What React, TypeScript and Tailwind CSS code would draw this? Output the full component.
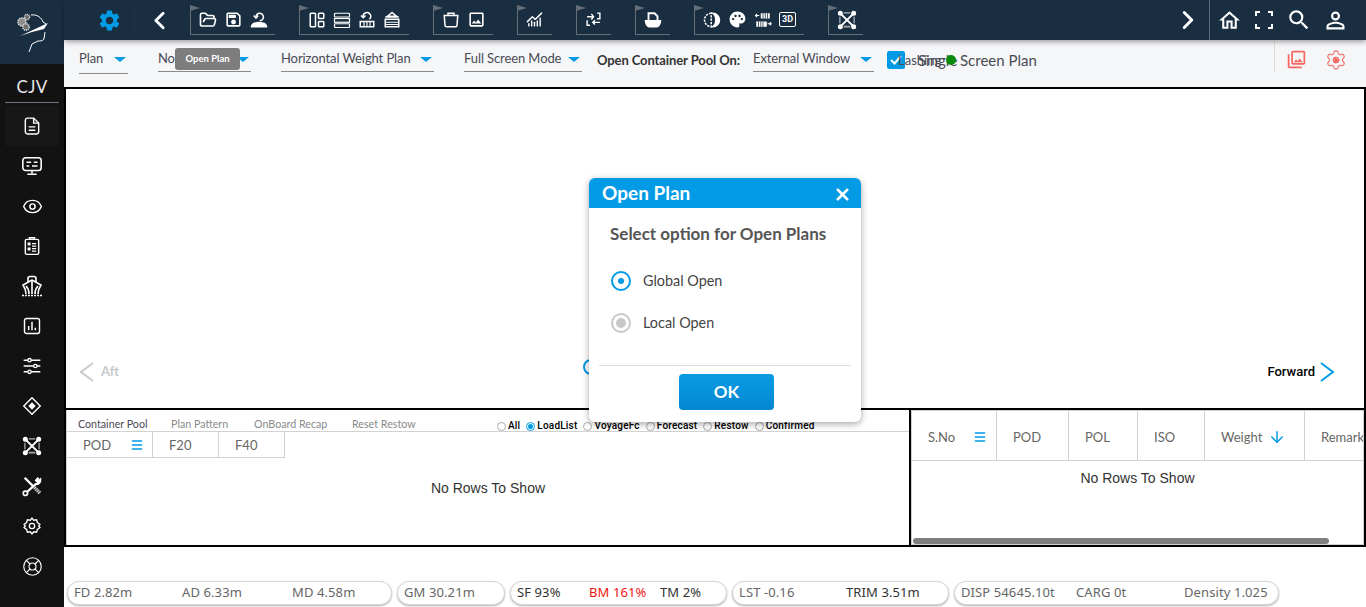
import { ChartNoAxesCombined, ChevronLeft, ChevronRight, Eye, FolderOpen, LifeBuoy, Menu, Play, Settings, ArrowDown, X } from "lucide-react";
import { MdOutlineHome, MdOutlineImage, MdOutlinePersonOutline, MdOutlinePhotoLibrary, MdOutlineSave, MdPalette, MdSearch, MdSettings } from "react-icons/md";
import type { ReactNode } from "react";

const muli = "font-['Lato','Noto_Sans',sans-serif]";

// small hand drawn icons for the ones the packages lack
const Svg = ({ size = 18, children }: { size?: number; children: ReactNode }) => (
    <svg width={size} height={size} viewBox="0 0 24 24" fill="none" stroke="currentColor" strokeWidth={2} className="shrink-0">
        {children}
    </svg>
);

const CloudUndo = () => (
    <Svg>
        <path d="M8 9a5 5 0 1 1 5 4" />
        <path d="M5 6l3 3.5L11 6" />
        <path d="M2 21c0-3 3-5 6-5 1-1 6-1 8 0 3 0 6 2 6 5H2z" fill="currentColor" />
    </Svg>
);

const LayoutIcon = () => (
    <Svg>
        <rect x="3" y="3" width="7" height="18" rx="1" />
        <rect x="14" y="3" width="7" height="7" rx="1" />
        <rect x="14" y="14" width="7" height="7" rx="1" />
    </Svg>
);

const RowsIcon = () => (
    <Svg>
        <rect x="2" y="3" width="20" height="5" rx="1" strokeWidth={1.6} />
        <rect x="2" y="10" width="20" height="5" strokeWidth={1.6} />
        <rect x="2" y="17" width="20" height="5" rx="1" strokeWidth={1.6} />
    </Svg>
);

const UndoBox = () => (
    <Svg>
        <path d="M7 8a5 5 0 1 1 8 3" />
        <path d="M4 6l3 3 3-3" />
        <rect x="3" y="14" width="18" height="7" />
        <path d="M8 14v7M12 14v7M16 14v7" strokeWidth={1.5} />
    </Svg>
);

const CraneBox = () => (
    <Svg>
        <path d="M12 2 6 7h12z" />
        <path d="M3 8h18" />
        <rect x="3" y="11" width="18" height="10" />
        <path d="M3 15h18M3 18h18" strokeWidth={1.5} />
    </Svg>
);

const CupIcon = () => (
    <Svg>
        <path d="M3 6h18l-1 13a2 2 0 0 1-2 2H6a2 2 0 0 1-2-2z" />
        <path d="M8 6V3h8v3" />
    </Svg>
);

const SwapIcon = () => (
    <Svg size={17}>
        <path d="M3 8h9M9 4l3 4-3 4" />
        <path d="M17 3h4v8h-4" />
        <path d="M21 16H11M14 13l-3 3 3 3" />
        <path d="M3 13v7h4" />
    </Svg>
);

const BowlDoc = () => (
    <Svg>
        <path d="M6 13V3h8l4 4v6" strokeWidth={2.5} />
        <path d="M2 13h20c0 5-3 8-6 8H8c-3 0-6-3-6-8z" fill="currentColor" />
    </Svg>
);

const HalfCircle = () => (
    <Svg>
        <path d="M11 3a9 9 0 0 0 0 18z" strokeDasharray="3 1.5" />
        <path d="M13 3a9 9 0 0 1 0 18c3-2 4-5 4-9s-1-7-4-9z" fill="currentColor" />
    </Svg>
);

const BoxArrows = () => (
    <Svg>
        <path d="M9 3h12v7H9zM3 14h14v7H3z" fill="currentColor" stroke="none" />
        <path d="M12 3v7M15 3v7M18 3v7M6 14v7M9 14v7M12 14v7" stroke="#1a2e42" strokeWidth={1} />
        <path d="M7 6H2M4 4 2 6l2 2M18 17h5M21 15l2 2-2 2" strokeWidth={1.5} />
    </Svg>
);

const CrossBox = () => (
    <Svg size={20}>
        <path d="M4 4l16 16M20 4 4 20" strokeWidth={2.4} />
        <path d="M8 3.5h8" strokeWidth={1} />
        <path d="M8 20h8" strokeWidth={2.5} stroke="#9a9a9a" />
        <path d="M3.5 8v8M20.5 8v8" strokeWidth={1} />
        <circle cx="4" cy="4" r="2" fill="currentColor" />
        <circle cx="20" cy="4" r="2" fill="currentColor" />
        <circle cx="4" cy="20" r="2" fill="currentColor" />
        <circle cx="20" cy="20" r="2" fill="currentColor" />
    </Svg>
);

const ThreeD = () => (
    <div className="w-[17px] h-[15px] border border-white rounded-[2px] flex items-center justify-center font-['Roboto',sans-serif] text-[9px] font-bold leading-none text-white shrink-0">
        3D
    </div>
);

const DocIcon = () => (
    <Svg size={20}>
        <path d="M6 2.5h8l6 6V19a2.5 2.5 0 0 1-2.5 2.5h-11A2.5 2.5 0 0 1 4 19V5a2.5 2.5 0 0 1 2-2.5z" strokeWidth={1.7} />
        <path d="M14 2.5V8.5h6" strokeWidth={1.7} />
        <path d="M8 13h8M8 17h8" strokeWidth={1.7} />
    </Svg>
);

const MonitorIcon = () => (
    <Svg size={22}>
        <rect x="2" y="3" width="20" height="14" rx="3" strokeWidth={1.7} />
        <path d="M6 8h5M14 8h4M6 12h3M12 12h6" strokeWidth={1.6} />
        <path d="M12 17v3M7 21h10" strokeWidth={1.7} />
    </Svg>
);

const ClipboardIcon = () => (
    <Svg size={20}>
        <rect x="4" y="4" width="16" height="18" rx="1.5" strokeWidth={1.7} />
        <path d="M9 4V2h6v2" strokeWidth={1.7} />
        <path d="M7 8h3v3H7zM7 14h3v3H7z" fill="currentColor" strokeWidth={0.5} />
        <path d="M12 9h5M12 12h5M12 15h5M12 18h5" strokeWidth={1.5} />
    </Svg>
);

const ShipIcon = () => (
    <Svg size={24}>
        <path d="M8 8V4.5a2 2 0 0 1 2-2h4a2 2 0 0 1 2 2V8" strokeWidth={1.6} />
        <path d="M12 6 3 11c2 3 3 6 3 9M12 6l9 5c-2 3-3 6-3 9" strokeWidth={1.6} />
        <path d="M12 6v14M9 20c0-3-1-6-3-8M15 20c0-3 1-6 3-8" strokeWidth={1.6} />
        <path d="M2 21.5h20" strokeWidth={1.4} strokeDasharray="2 1" />
    </Svg>
);

const ChartBox = () => (
    <Svg size={20}>
        <rect x="3" y="3" width="18" height="18" rx="2.5" strokeWidth={1.7} />
        <path d="M8 17v-5M12 17V7M16 17v-3" strokeWidth={1.8} />
    </Svg>
);

const SlidersIcon = () => (
    <Svg size={20}>
        <path d="M2 5h5M11 5h11M2 12h12M18 12h4M2 19h5M11 19h11" strokeWidth={1.8} />
        <circle cx="9" cy="5" r="2" strokeWidth={1.6} />
        <circle cx="16" cy="12" r="2" strokeWidth={1.6} />
        <circle cx="9" cy="19" r="2" strokeWidth={1.6} />
    </Svg>
);

const DiamondIcon = () => (
    <Svg size={22}>
        <path d="M12 3l9 9-9 9-9-9z" strokeWidth={1.5} />
        <path d="M12 8l4 4-4 4-4-4z" fill="currentColor" stroke="none" />
    </Svg>
);

const ToolsIcon = () => (
    <Svg size={22}>
        <path d="M4 3l9 9" strokeWidth={2.6} />
        <path d="M13 12l8 8" strokeWidth={4} strokeDasharray="1.6 .7" stroke="#cfcfcf" />
        <path d="M19 3l-2.5 3 1.5 1.5 3-2.5a4.5 4.5 0 0 1-5 5L6.5 18.5" strokeWidth={2.4} />
        <circle cx="4.8" cy="20" r="2.4" strokeWidth={1.8} />
    </Svg>
);

const HexGear = () => (
    <Svg size={20}>
        <path d="M12 2.5l2 2.5 3.5-.5 1 3.5 3 2-1.5 2 1.5 2-3 2-1 3.5-3.5-.5-2 2.5-2-2.5-3.5.5-1-3.5-3-2 1.5-2-1.5-2 3-2 1-3.5 3.5.5z" strokeWidth={1.6} />
        <circle cx="12" cy="12" r="3.2" strokeWidth={1.6} />
    </Svg>
);

const Logo = () => (
    <svg width="40" height="40" viewBox="0 0 40 40" fill="none" className="text-white">
        <circle cx="10" cy="10" r="4" fill="#8d8d8d" stroke="#d9d9d9" strokeWidth="1.6" strokeDasharray="1.4 .8" />
        <circle cx="14" cy="15" r="3.2" fill="#6f6f6f" stroke="#d9d9d9" strokeWidth="1.5" strokeDasharray="1.2 .7" />
        <circle cx="15" cy="5" r="2.6" fill="#6f6f6f" stroke="#d9d9d9" strokeWidth="1.4" strokeDasharray="1 .7" />
        <path d="M19 3c6-1 11 3 12 7l3 2" stroke="currentColor" strokeWidth="1" />
        <path d="M8 24 36 11l-4 6-12 3-12 4z" fill="currentColor" />
        <path d="M33 20l-1 7c-1 2-4 2-6 2l-6 3-3 8" stroke="currentColor" strokeWidth="1" />
    </svg>
);

const topGroups: ReactNode[][] = [
    [<FolderOpen size={18} strokeWidth={2.2} />, <MdOutlineSave size={19} />, <CloudUndo />],
    [<LayoutIcon />, <RowsIcon />, <UndoBox />, <CraneBox />],
    [<CupIcon />, <MdOutlineImage size={19} />],
    [<ChartNoAxesCombined size={17} />],
    [<SwapIcon />],
    [<BowlDoc />],
    [<HalfCircle />, <MdPalette size={19} />, <BoxArrows />, <ThreeD />],
    [<CrossBox />],
];

const groupWidths = ["w-[85px]", "w-[110px]", "w-[60px]", "w-[35px]", "w-[35px]", "w-[35px]", "w-[110px]", "w-[35px]"];

const sideIcons: ReactNode[] = [
    <DocIcon />,
    <MonitorIcon />,
    <Eye size={21} strokeWidth={1.7} />,
    <ClipboardIcon />,
    <ShipIcon />,
    <ChartBox />,
    <SlidersIcon />,
    <DiamondIcon />,
    <CrossBox />,
    <ToolsIcon />,
    <HexGear />,
    <LifeBuoy size={21} strokeWidth={1.3} />,
];

const ToolGroup = ({ width, children }: { width: string; children: ReactNode }) => (
    <div className={`relative ${width} h-[30px] border-l border-b border-[#656d76] flex items-center pl-[8px] gap-[7px] text-white`}>
        <svg width="10" height="6" viewBox="0 0 10 6" className="absolute -left-px top-0">
            <path d="M0 0l10 3-10 3z" fill="#656d76" />
        </svg>
        {children}
    </div>
);

const Dropdown = ({ label, width, className = "" }: { label: string; width: string; className?: string }) => (
    <div className={`${width} ${className} border-b border-[#8a8a8a] flex justify-between items-start shrink-0`}>
        <span className="text-[13px] leading-[20px] tracking-[-0.1px] text-[#4a4a55] whitespace-nowrap">{label}</span>
        <span className="mt-[9px] mr-[2px] border-x-[6px] border-x-transparent border-t-[5px] border-t-[#039be5]" />
    </div>
);

const Radio = ({ label, checked }: { label: string; checked?: boolean }) => (
    <div className="flex items-center gap-[2px] shrink-0">
        <span className={`w-[9px] h-[9px] rounded-full border flex items-center justify-center ${checked ? "border-[#039be5]" : "border-[#aaa]"}`}>
            {checked && <span className="w-[5px] h-[5px] rounded-full bg-[#039be5]" />}
        </span>
        <span className="text-[10px] font-medium tracking-[0.2px] text-black">{label}</span>
    </div>
);

const Stat = ({ label, width, className = "" }: { label: string; width: string; className?: string }) => (
    <span className={`${width} ${className} shrink-0 whitespace-nowrap`}>{label}</span>
);

const Pill = ({ width, children }: { width: string; children: ReactNode }) => (
    <div className={`${width} h-[24px] shrink-0 rounded-[12px] border border-[#d6d6d6] bg-white shadow-[0_1px_2px_rgba(0,0,0,0.3)] flex items-center pl-[6px] text-[13px] tracking-[0.1px] text-[#666] font-['Noto_Sans',sans-serif]`}>
        {children}
    </div>
);

const HeadCell = ({ width, children }: { width: string; children: ReactNode }) => (
    <div className={`${width} shrink-0 h-full border-r border-[#d2d2d2] flex items-center text-[13px] text-[#666]`}>
        {children}
    </div>
);

export default function App() {
    return (
        <div className={`relative w-[1366px] h-[607px] overflow-hidden flex bg-white ${muli}`}>
            {/* left rail */}
            <aside className="w-[64px] shrink-0 bg-[#121212] flex flex-col text-white">
                <div className="h-[64px] bg-[#1a2e42] flex items-center justify-center">
                    <Logo />
                </div>
                <div className="mx-[5px] h-[39px] border-b border-[#6c7680] flex items-end justify-center pb-[2px] text-[17px] leading-[26px] tracking-[0.3px] text-[#e8e8e8]">
                    CJV
                </div>
                <div className="flex flex-col pt-[3px]">
                    {sideIcons.map((icon, i) => (
                        <div key={i} className={`h-[40px] flex items-center justify-center ${i === 0 ? "mx-[5px] bg-[#171717]" : ""}`}>
                            {icon}
                        </div>
                    ))}
                </div>
            </aside>

            <main className="flex-1 flex flex-col min-w-0">
                {/* top bar */}
                <header className="relative z-10 h-[40px] shrink-0 bg-[#1a2e42] flex items-center text-white shadow-[0_2px_5px_rgba(0,0,0,0.35)]">
                    <div className="ml-[33px] text-[#039be5]"><MdSettings size={25} /></div>
                    <div className="ml-[12px] w-px h-[28px] bg-[#1f3549]" />
                    <ChevronLeft size={29} strokeWidth={2.4} className="ml-[10px]" />
                    <div className="ml-[16px] flex gap-[24px]">
                        {topGroups.map((icons, i) => (
                            <ToolGroup key={i} width={groupWidths[i]}>
                                {icons.map((icon, j) => (
                                    <span key={j} className="contents">{icon}</span>
                                ))}
                            </ToolGroup>
                        ))}
                    </div>
                    <div className="flex-1" />
                    <ChevronRight size={30} strokeWidth={2.4} className="mr-[6px]" />
                    <div className="w-px h-[40px] bg-[#5e6c79]" />
                    <div className="flex items-center gap-[10px] pl-[7px] pr-[17px]">
                        <MdOutlineHome size={25} />
                        <div className="w-[24px] h-[24px] flex items-center justify-center">
                            <svg width="18" height="18" viewBox="0 0 18 18" fill="none" stroke="currentColor" strokeWidth="2">
                                <path d="M1 5V1h4M13 1h4v4M17 13v4h-4M5 17H1v-4" />
                            </svg>
                        </div>
                        <MdSearch size={26} />
                        <MdOutlinePersonOutline size={27} />
                    </div>
                </header>

                {/* plan options */}
                <section className="h-[47px] shrink-0 bg-[#f5f6f8] flex items-start pl-[15px] pt-[8px]">
                    <Dropdown label="Plan" width="w-[49px]" className="h-[26px]" />
                    <Dropdown label="Normal Plan" width="w-[93px]" className="ml-[30px] h-[24px]" />
                    <Dropdown label="Horizontal Weight Plan" width="w-[153px]" className="ml-[30px] h-[24px]" />
                    <Dropdown label="Full Screen Mode" width="w-[118px]" className="ml-[30px] h-[24px]" />
                    <span className="ml-[15px] mt-[2px] w-[156px] text-[13px] leading-[20px] tracking-[-0.1px] font-bold text-[#333] whitespace-nowrap">Open Container Pool On:</span>
                    <Dropdown label="External Window" width="w-[121px]" className="h-[24px]" />
                    <div className="relative ml-[13px] mt-[3px] w-[18px] h-[18px] rounded-[2px] bg-[#039be5] flex items-center justify-center text-white shrink-0">
                        <svg width="14" height="14" viewBox="0 0 14 14" fill="none" stroke="currentColor" strokeWidth="2"><path d="M2 7l3.5 3.5L12 3" /></svg>
                        <span className="absolute left-[11px] top-[-1px] text-[13px] leading-[20px] text-[#4a4a55]">Lashing</span>
                    </div>
                    <span className="ml-[13px] mt-[2px] w-[28px] text-[15px] leading-[20px] text-[#4a4a55]">Single</span>
                    <span className="relative mt-[7px] w-[10px] h-[10px] rounded-full bg-[#0a8a0a] shrink-0" />
                    <span className="ml-[4px] mt-[2px] text-[15px] leading-[20px] text-[#4a4a55] whitespace-nowrap">Screen Plan</span>
                    <div className="ml-auto flex items-start">
                        <div className="w-px h-[31px] -mt-[7px] bg-[#dcdcdc]" />
                        <MdOutlinePhotoLibrary size={21} className="ml-[11px] mt-[1px] text-[#f4685f]" />
                        <div className="relative ml-[18px] mr-[19px] mt-[1px] text-[#f4685f]">
                            <Settings size={22} strokeWidth={1.2} />
                            <Play size={7} fill="currentColor" className="absolute left-[8px] top-[7.5px]" />
                        </div>
                    </div>
                </section>

                {/* plan view */}
                <section className="relative h-[323px] shrink-0 border-2 border-black flex flex-col">
                    <div className="mt-auto mb-[26px] flex items-center justify-between pl-[12px] pr-[28px]">
                        <div className="flex items-center gap-[5px] text-[#c9c9c9]">
                            <svg width="18" height="20" viewBox="0 0 18 20" fill="none" stroke="currentColor" strokeWidth="2"><path d="M15 1 3 10l12 9" /></svg>
                            <span className="text-[13px] font-bold">Aft</span>
                        </div>
                        <div className="flex items-center gap-[3px] text-[#039be5]">
                            <span className="text-[13px] font-medium text-black font-['Roboto',sans-serif]">Forward</span>
                            <svg width="18" height="20" viewBox="0 0 18 20" fill="none" stroke="currentColor" strokeWidth="2"><path d="M3 1l12 9-12 9" /></svg>
                        </div>
                    </div>
                    <span className="absolute left-[517px] top-[270px] w-[16px] h-[16px] rounded-full border-2 border-[#039be5]" />
                </section>

                {/* tables */}
                <section className="h-[137px] shrink-0 flex border-x-2 border-b-2 border-black">
                    <div className="w-[845px] shrink-0 border-r-2 border-black flex flex-col border-l border-l-[#d2d2d2]">
                        <div className="h-[22px] shrink-0 flex items-end border-b border-[#d2d2d2] text-[10.7px] leading-[14px] text-[#8a8a8a]">
                            <span className="ml-[11px] w-[93px] text-[#4a4a55]">Container Pool</span>
                            <span className="w-[83px]">Plan Pattern</span>
                            <span className="w-[98px]">OnBoard Recap</span>
                            <span className="w-[145px]">Reset Restow</span>
                            <div className="flex gap-[6px] font-['Roboto',sans-serif] -mb-[2px]">
                                <Radio label="All" />
                                <Radio label="LoadList" checked />
                                <Radio label="VoyageFc" />
                                <Radio label="Forecast" />
                                <Radio label="Restow" />
                                <Radio label="Confirmed" />
                            </div>
                        </div>
                        <div className="h-[26px] shrink-0 flex">
                            <div className="flex border-b border-[#d2d2d2] h-full">
                                <HeadCell width="w-[86px]">
                                    <span className="ml-[16px] flex-1 pt-[2px]">POD</span>
                                    <Menu size={14} strokeWidth={2.5} className="mr-[8px] text-[#039be5]" />
                                </HeadCell>
                                <HeadCell width="w-[66px]"><span className="ml-[16px] pt-[2px]">F20</span></HeadCell>
                                <HeadCell width="w-[66px]"><span className="ml-[16px] pt-[2px]">F40</span></HeadCell>
                            </div>
                        </div>
                        <p className="pt-[21px] text-center text-[14px] leading-[18px] text-[#333] font-['Liberation_Sans',sans-serif]">No Rows To Show</p>
                    </div>
                    <div className="flex-1 min-w-0 border border-[#d2d2d2] flex flex-col relative overflow-hidden">
                        <div className="h-[50px] shrink-0 flex border-b border-[#d2d2d2]">
                            <HeadCell width="w-[85px]">
                                <span className="ml-[16px] flex-1 pt-[4px]">S.No</span>
                                <Menu size={14} strokeWidth={2.5} className="mr-[9px] mt-[2px] text-[#039be5]" />
                            </HeadCell>
                            <HeadCell width="w-[72px]"><span className="ml-[16px] pt-[4px]">POD</span></HeadCell>
                            <HeadCell width="w-[69px]"><span className="ml-[16px] pt-[4px]">POL</span></HeadCell>
                            <HeadCell width="w-[67px]"><span className="ml-[16px] pt-[4px]">ISO</span></HeadCell>
                            <HeadCell width="w-[100px]">
                                <span className="ml-[16px] pt-[4px]">Weight</span>
                                <ArrowDown size={18} className="ml-[6px] mt-[2px] text-[#039be5]" />
                            </HeadCell>
                            <div className="flex items-center pl-[16px] pt-[4px] text-[13px] text-[#666] whitespace-nowrap">Remarks</div>
                        </div>
                        <p className="pt-[8px] text-center text-[14px] leading-[18px] text-[#333] font-['Liberation_Sans',sans-serif]">No Rows To Show</p>
                        <div className="absolute left-px bottom-0 w-[416px] h-[6px] rounded-full bg-[#808080]" />
                    </div>
                </section>

                {/* ship stats */}
                <footer className="flex gap-[5px] pl-[3px] pt-[34px]">
                    <Pill width="w-[325px]">
                        <Stat label="FD 2.82m" width="w-[108px]" />
                        <Stat label="AD 6.33m" width="w-[110px]" />
                        <Stat label="MD 4.58m" width="w-[90px]" />
                    </Pill>
                    <Pill width="w-[108px]"><Stat label="GM 30.21m" width="w-[90px]" /></Pill>
                    <Pill width="w-[217px]">
                        <Stat label="SF 93%" width="w-[72px]" className="text-[#333]" />
                        <Stat label="BM 161%" width="w-[71px]" className="text-[#f01414]" />
                        <Stat label="TM 2%" width="w-[60px]" className="text-[#333]" />
                    </Pill>
                    <Pill width="w-[217px]">
                        <Stat label="LST -0.16" width="w-[107px]" />
                        <Stat label="TRIM 3.51m" width="w-[90px]" className="text-[#333]" />
                    </Pill>
                    <Pill width="w-[325px]">
                        <Stat label="DISP 54645.10t" width="w-[115px]" />
                        <Stat label="CARG 0t" width="w-[108px]" />
                        <Stat label="Density 1.025" width="w-[90px]" />
                    </Pill>
                </footer>
            </main>

            {/* hover tip over the plan selector */}
            <div className="absolute z-20 left-[175px] top-[48px] w-[65px] h-[22px] rounded-[3px] bg-[#7d7d7d] flex items-center justify-center text-[9.5px] font-bold text-white">
                Open Plan
            </div>

            {/* open plan dialog */}
            <div className="absolute z-30 left-[589px] top-[178px] w-[272px] h-[244px] rounded-[6px] bg-white shadow-[0_2px_7px_rgba(0,0,0,0.35)] flex flex-col overflow-hidden">
                <div className="h-[30px] shrink-0 bg-[#039be5] flex items-center justify-between pl-[13px] pr-[9px] text-white">
                    <span className="text-[19px] font-bold">Open Plan</span>
                    <X size={19} strokeWidth={3.2} className="mt-[2px]" />
                </div>
                <p className="mt-[16px] ml-[21px] text-[17px] leading-[20px] font-bold text-[#555] whitespace-nowrap">Select option for Open Plans</p>
                <div className="mt-[27px] ml-[22px] h-[20px] flex items-center gap-[12px] text-[14.4px] text-[#444]">
                    <span className="w-[20px] h-[20px] rounded-full border-2 border-[#039be5] flex items-center justify-center">
                        <span className="w-[6px] h-[6px] rounded-full bg-[#039be5]" />
                    </span>
                    Global Open
                </div>
                <div className="mt-[22px] ml-[22px] h-[20px] flex items-center gap-[12px] text-[14.4px] text-[#444]">
                    <span className="w-[20px] h-[20px] rounded-full border-2 border-[#c8c8c8] flex items-center justify-center">
                        <span className="w-[10px] h-[10px] rounded-full bg-[#c8c8c8]" />
                    </span>
                    Local Open
                </div>
                <div className="mt-[32px] mx-[10px] border-t border-[#ddd]" />
                <button className="mt-[8px] ml-[90px] w-[95px] h-[36px] rounded-[4px] bg-gradient-to-b from-[#0a9be3] to-[#0288d1] text-[17px] font-bold text-white">
                    OK
                </button>
            </div>
        </div>
    );
}
